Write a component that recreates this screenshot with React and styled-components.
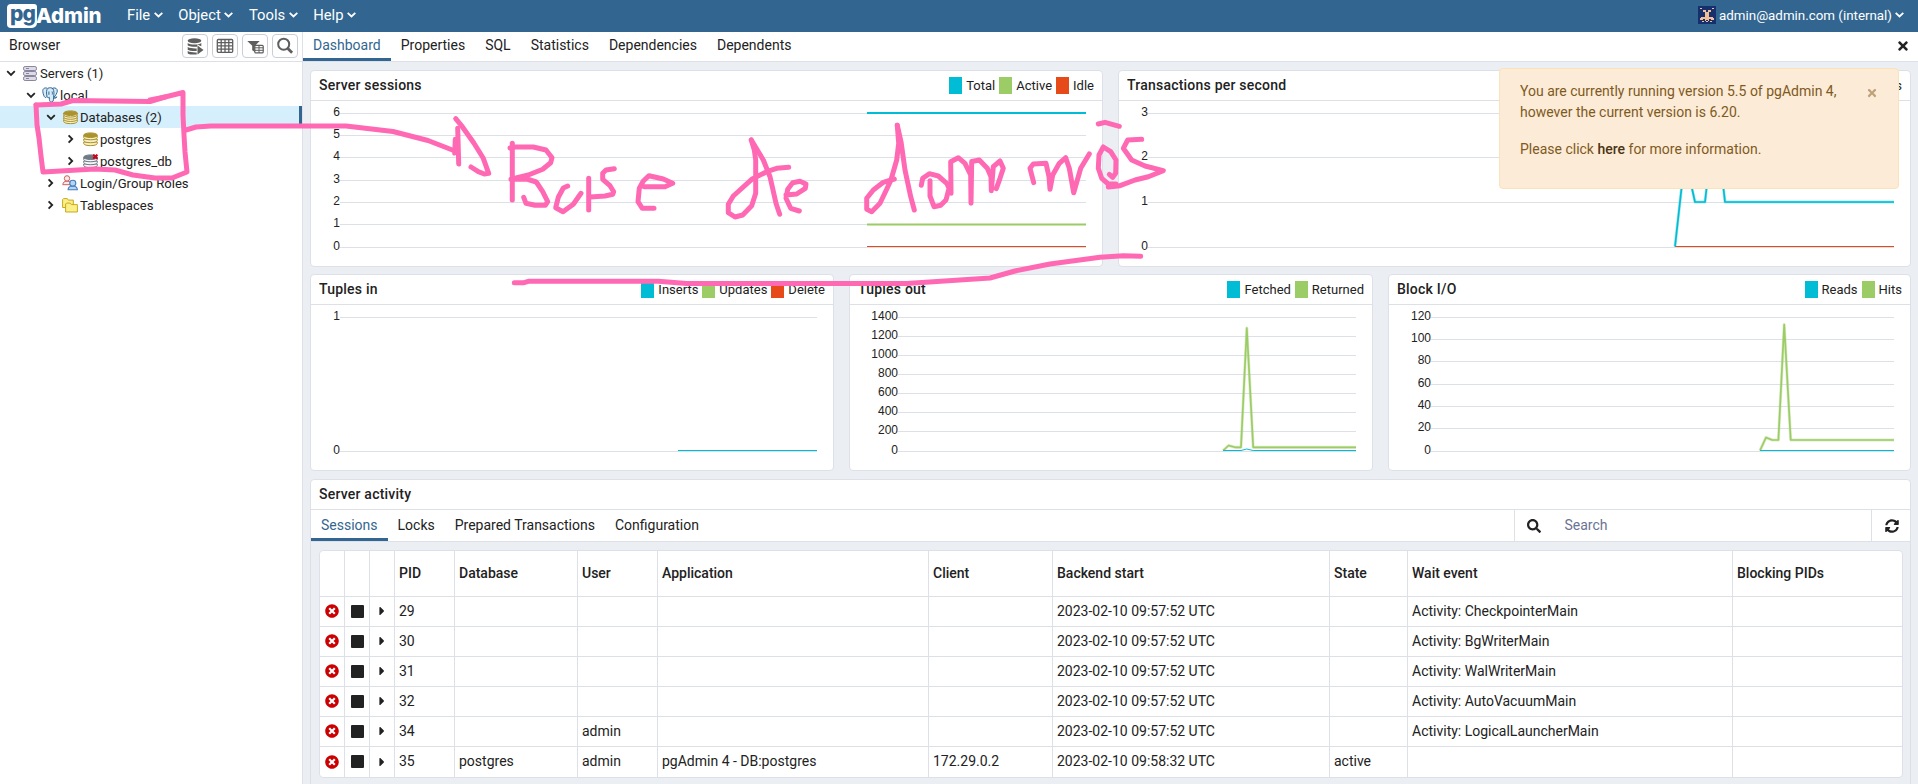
import React from "react";
import styled, { createGlobalStyle } from "styled-components";
import { FaSearch, FaSyncAlt, FaTimesCircle, FaCaretRight, FaTimes } from "react-icons/fa";

const c = {
  primary: "#326690",
  border: "#dde0e6",
  bg: "#ebeef3",
  text: "#222222",
  cyan: "#00bcd4",
  green: "#9ccc65",
  red: "#e64a19",
  ink: "#ff69b4",
};

const GlobalStyle = createGlobalStyle`
  *, *::before, *::after { box-sizing: border-box; }
  body {
    margin: 0;
    overflow: hidden;
    font: 14px/21px Roboto, "Liberation Sans", sans-serif;
    color: ${c.text};
    background: #fff;
  }
`;

const Page = styled.div`
  position: relative;
  display: flex;
  flex-direction: column;
  width: 1918px;
  height: 784px;
  overflow: hidden;
`;

/* ---------- top bar ---------- */
const TopBar = styled.header`
  display: flex;
  align-items: center;
  flex: 0 0 32px;
  padding: 0 14px 2px 7px;
  background: ${c.primary};
  color: #fff;
`;
const Logo = styled.div`
  display: flex;
  align-items: center;
  width: 96px;
  height: 25px;
  margin: 1px 24px 0 0;
  font: 800 20.5px/24px Inter, sans-serif;
  letter-spacing: -0.1px;
`;
const LogoBadge = styled.span`
  flex: none;
  width: 30px;
  height: 24px;
  padding-left: 3px;
  border-radius: 4px 3px 5px 4px;
  background: #fff;
  color: ${c.primary};
  font-size: 21px;
  line-height: 19px;
  letter-spacing: -1px;
`;
const LogoName = styled.span`
  margin-left: -1px;
  line-height: 22px;
`;
const MenuItem = styled.div`
  display: flex;
  align-items: center;
  gap: 3.5px;
  margin-right: 15.6px;
  font-size: 14.8px;
`;
const UserMenu = styled.div`
  display: flex;
  align-items: center;
  margin-left: auto;
  font-size: 13.35px;
  gap: 3px;
`;

/* ---------- body ---------- */
const Body = styled.div`
  display: flex;
  flex: 1;
  min-height: 0;
`;
const Sidebar = styled.aside`
  flex: 0 0 303px;
  border-right: 1px solid ${c.border};
`;
const SidebarHead = styled.div`
  display: flex;
  align-items: center;
  gap: 4px;
  height: 30px;
  padding: 0 4px 2px 9px;
  border-bottom: 1px solid ${c.border};
`;
const SidebarTitle = styled.span`
  flex: 1;
`;
const ToolButton = styled.button`
  display: flex;
  align-items: center;
  justify-content: center;
  width: 26px;
  height: 24px;
  margin-top: 1px;
  padding: 0;
  border: 1px solid #c9cfd6;
  border-radius: 4px;
  background: #fff;
`;
const TreeRow = styled.div`
  display: flex;
  align-items: center;
  height: 22px;
  padding-left: ${(p) => 6 + p.$level * 20}px;
  font-size: 13.1px;
  background: ${(p) => (p.$active ? "#d6effc" : "transparent")};
  border-right: ${(p) => (p.$active ? `3px solid ${c.primary}` : "none")};
  svg { flex: none; }
`;
const TreeIcon = styled.span`
  display: flex;
  justify-content: center;
  width: 18px;
  margin: 0 1px 0 5px;
`;

const Main = styled.main`
  display: flex;
  flex: 1;
  min-width: 0;
  flex-direction: column;
  background: ${c.bg};
`;
const TabBar = styled.nav`
  display: flex;
  flex: none;
  height: ${(p) => p.$height}px;
  border-bottom: 1px solid ${c.border};
  background: #fff;
`;
const Tab = styled.div`
  padding: ${(p) => p.$top}px 10px 0;
  color: ${(p) => (p.$active ? c.primary : c.text)};
  box-shadow: ${(p) => (p.$active ? `inset 0 -3px ${c.primary}` : "none")};
`;
const TabClose = styled.div`
  display: flex;
  align-items: center;
  margin-left: auto;
  padding: 0 8px 1px 0;
`;
const Dashboard = styled.div`
  flex: 1;
  padding: 8px 7px 0;
`;
const CardRow = styled.div`
  display: grid;
  grid-template-columns: ${(p) => p.$columns};
  gap: 15px;
  margin-bottom: ${(p) => p.$after}px;
`;
const Card = styled.section`
  height: ${(p) => p.$height}px;
  overflow: hidden;
  border: 1px solid ${c.border};
  border-radius: 4px;
  background: #fff;
`;
const CardHead = styled.div`
  display: flex;
  align-items: center;
  justify-content: space-between;
  height: 30px;
  padding: 0 8px;
  border-bottom: 1px solid ${c.border};
`;
const CardTitle = styled.div`
  font-weight: 500;
  letter-spacing: 0.22px;
`;
const Legend = styled.div`
  display: flex;
  align-items: center;
  gap: 4px;
  font-size: 13px;
`;
const LegendItem = styled.span`
  display: flex;
  align-items: center;
  gap: 4px;
  &::before {
    content: "";
    width: 13px;
    height: 17px;
    background: ${(p) => p.$color};
  }
`;
const Plot = styled.svg`
  display: block;
  text {
    font: 12px "Liberation Sans", sans-serif;
    fill: ${c.text};
    text-anchor: end;
  }
`;

/* ---------- activity ---------- */
const SearchBox = styled.div`
  display: flex;
  align-items: center;
  width: 357px;
  margin-left: auto;
  padding-left: 12px;
  gap: 23.5px;
  border-left: 1px solid ${c.border};
`;
const SearchHint = styled.span`
  color: #6b7394;
`;
const Refresh = styled.div`
  display: flex;
  align-items: center;
  justify-content: center;
  width: 39px;
  padding-left: 1px;
  border-left: 1px solid ${c.border};
`;
const ActivityBody = styled.div`
  height: 300px;
  padding: 8px;
  background: ${c.bg};
`;
const Table = styled.div`
  width: 1584px;
  border: 1px solid ${c.border};
  border-radius: 4px;
  background: #fff;
  overflow: hidden;
`;
const TableRow = styled.div`
  display: grid;
  grid-template-columns: 25px 25px 25px 60px 123px 80px 271px 124px 277px 78px 325px 169px;
  height: ${(p) => (p.$head ? 46 : 30)}px;
  font-weight: ${(p) => (p.$head ? 500 : 400)};
  border-bottom: 1px solid ${c.border};
  &:last-child { border-bottom: 0; }
`;
const Cell = styled.div`
  display: flex;
  align-items: center;
  justify-content: ${(p) => (p.$center ? "center" : "flex-start")};
  padding: 0 ${(p) => (p.$center ? 0 : 4)}px 1px;
  border-right: 1px solid ${c.border};
  &:last-child { border-right: 0; }
`;
const StopSquare = styled.span`
  width: 13px;
  height: 13px;
  margin-left: 1px;
  border-radius: 1px;
  background: ${c.text};
`;

/* ---------- overlays ---------- */
const Notice = styled.div`
  position: absolute;
  top: 68px;
  left: 1499px;
  display: flex;
  justify-content: space-between;
  width: 400px;
  height: 121px;
  padding: 12px 20px 0 20px;
  border: 1px solid #fbe2bb;
  border-radius: 4px;
  background: #fcebd7;
  color: #7e5a22;
`;
const NoticeText = styled.p`
  width: 325px;
  margin: 0 0 16px;
`;
const NoticeLink = styled.b`
  font-weight: 500;
  color: #4b3414;
`;
const NoticeClose = styled.span`
  padding-top: 3px;
  color: #bfa27a;
`;
const Annotation = styled.svg`
  position: absolute;
  inset: 0;
  pointer-events: none;
`;

/* ---------- icons ---------- */
const Chevron = ({ right }) => (
  <svg width="10" height="10" viewBox="0 0 10 10" fill="none" stroke={c.text} strokeWidth="1.8">
    {right ? <path d="M2.6 1.4 6.2 5 2.6 8.6" /> : <path d="M1.2 3.2 5 6.9 8.8 3.2" />}
  </svg>
);
const MenuChevron = () => (
  <svg width="9" height="8" viewBox="0 0 9 8" fill="none" stroke="#fff" strokeWidth="1.8">
    <path d="M.7 1.8 4.5 5.4 8.3 1.8" />
  </svg>
);
const ServersIcon = () => (
  <svg width="14" height="15" viewBox="0 0 14 15" fill="#dcdbe6" stroke="#8986a0" strokeWidth="1">
    {[0.5, 5.5, 10.5].map((y) => (
      <g key={y}>
        <rect x=".5" y={y} width="13" height="4" rx="1.6" />
        <path d={`M3 ${y + 2}h3`} />
      </g>
    ))}
  </svg>
);
const ElephantIcon = () => (
  <svg width="16" height="16" viewBox="0 0 16 16" fill="#d5e9f7" stroke="#336791" strokeWidth="1" strokeLinejoin="round">
    <path d="M5.2 1.2C2.4.3.5 1.8.8 4.5c.3 2.5 1.3 5.5 2.4 6 .8.3 1.3-.5 1.9-1.2" />
    <path d="M10.5 1.2c2.9-.9 5 .5 4.8 2.9-.2 2-1.8 4.700-3.200 6 .9.4 2 .3 2.800-.2-.7 1.200-2 1.600-3.200 1.200" />
    <path d="M5 9.5C4.3 6.5 4.2 2.6 5.8 1.3 7.5.4 10 .5 11 1.9c1.2 1.9 1 5 .7 7.1-.3 2.5.2 5.3-1.7 6.1-2 .5-2.5-1-2.6-2.8l-.1-2C6.3 11 5.4 10.8 5 9.5Z" />
    <path d="M6.9 4.5v3.300M10 4.5c.6 1 .5 2 .2 3" />
  </svg>
);
const DbIcon = ({ dark = "#ab922d", light = "#f7efc4", layers = 3, off }) => (
  <svg width="15" height="15" viewBox="0 0 15 15">
    <g fill={light} stroke={dark} strokeWidth="1">
      {Array.from({ length: layers }, (_, i) => {
        const y = 12.2 - i * (8.8 / layers);
        return <path key={i} d={`M.7 ${y - 2.2}v1.4C.7 ${y + 2.2} 14.3 ${y + 2.2} 14.3 ${y - 0.8}v-1.4Z`} />;
      })}
      <ellipse cx="7.5" cy="3.2" rx="6.8" ry="2.3" fill={dark} />
    </g>
    {off && <path d="M10.2.6 14.4 4.8M14.4.6 10.2 4.8" stroke="#d0021b" strokeWidth="2" />}
  </svg>
);
const Person = ({ fill, stroke }) => (
  <g fill={fill} stroke={stroke} strokeWidth="1" strokeLinejoin="round">
    <path d="M.6 9.5c.2-2.5 1.7-3.3 3.3-3.5h1.7c1.6.2 3.1 1 3.3 3.5Z" />
    <circle cx="4.8" cy="3.2" r="2.7" />
  </g>
);
const RolesIcon = () => (
  <svg width="17" height="16" viewBox="0 0 17 16">
    <g transform="translate(.2 .2)"><Person fill="#fbe9e7" stroke="#cc5f5f" /></g>
    <g transform="translate(5.4 4.8) scale(1.12 1.05)"><Person fill="#b5d5f3" stroke="#4a7ebb" /></g>
  </svg>
);
const FoldersIcon = () => (
  <svg width="16" height="15" viewBox="0 0 16 15" fill="#faf089" stroke="#c9a91c" strokeWidth="1" strokeLinejoin="round">
    <path d="M.6 9.5V1.5L1.5.6h3.8l1 1.5h5v7.4Z" />
    <path d="M3.6 14V6l.9-.9h3.9l1 1.5h6V14Z" />
  </svg>
);
const QueryIcon = () => (
  <svg width="17" height="18" viewBox="0 0 17 18" fill="#5e5e5e">
    <ellipse cx="7.5" cy="3.8" rx="6.8" ry="2.5" />
    <path d="M.7 6c2.5 2 11 2 13.6 0v3.3l-4-1.8v2.3C6.5 10 2.5 9.6.7 8.5ZM.7 10c2 1.2 6 1.6 9 1.4v2.5c-3.5.3-7.5-.1-9-1.2ZM.7 14.1c2 1.2 6 1.6 9 1.4v1.9c-4 .4-9 0-9-1.5Z" />
    <path d="M10.5 8.5 16.5 13l-6 4.5Z" />
  </svg>
);
const GridIcon = () => (
  <svg width="18" height="16" viewBox="0 0 18 16" fill="none" stroke="#5e5e5e" strokeWidth="1.3">
    <rect x="1.3" y="1.5" width="15.4" height="12.8" rx="1" />
    <path d="M1.3 4.7h15.4M1.3 7.9h15.4M1.3 11.1h15.4M5.2 1.5v12.8M9 1.5v12.8M12.8 1.5v12.8" />
  </svg>
);
const FilterIcon = () => (
  <svg width="17" height="15" viewBox="0 0 17 15">
    <path fill="#5e5e5e" d="M.3 2h12.4L8 6.8v6.2L5.2 11.2V6.8Z" />
    <rect x="7.8" y="6.3" width="8.4" height="7.6" rx="1" fill="#fff" stroke="#5e5e5e" strokeWidth="1.2" />
    <path d="M8 8.8h8.4M8 11.3h8.4M12 6.5v7.4" stroke="#5e5e5e" />
  </svg>
);
const MagnifierIcon = () => (
  <svg width="18" height="18" viewBox="0 0 18 18" fill="none" stroke="#5e5e5e">
    <circle cx="7.7" cy="7.2" r="5.5" strokeWidth="2" />
    <path d="m11.8 11.5 4.3 4.3" strokeWidth="2.8" />
  </svg>
);
const Identicon = () => (
  <svg width="18" height="18" viewBox="0 0 18 18" shapeRendering="crispEdges">
    <rect width="18" height="18" fill="#16306e" />
    <path fill="#f3bd98" d="M2 2h2v1H2ZM14 2h2v1h-2ZM5 4h3v2h2V4h3v2h-2v4H7V6H5ZM3 11h4v-1h4v1h4v3h-2v-1h-2v1H7v-1H5v1H3ZM2 12h1v2H2ZM15 12h1v2h-1ZM4 15h2v1H4ZM7 14h1v1H7ZM10 14h1v1h-1ZM8 15h2v1H8ZM12 15h2v1h-2Z" />
  </svg>
);

/* ---------- chart ---------- */
const TOP = 12;
const BOTTOM = 146;

function Chart({ title, width, left, ticks, legend, children }) {
  const right = width - 18;
  return (
    <Card $height={197}>
      <CardHead>
        <CardTitle>{title}</CardTitle>
        <Legend>
          {legend.map(([name, color]) => (
            <LegendItem key={name} $color={color}>{name}</LegendItem>
          ))}
        </Legend>
      </CardHead>
      <Plot width={width - 2} height={165}>
        {ticks.map((tick, i) => {
          const y = Math.floor(TOP + ((BOTTOM - TOP) * i) / (ticks.length - 1));
          return (
            <g key={tick}>
              <rect x={left} y={y} width={right - left} height="1" fill={c.border} />
              <text x={left} y={y + 3}>{tick}</text>
            </g>
          );
        })}
        {children}
      </Plot>
    </Card>
  );
}
const Series = ({ points, color }) => (
  <g fill="none" strokeLinejoin="round">
    <polyline points={points} stroke={color} strokeOpacity=".35" strokeWidth="3" />
    <polyline points={points} stroke={color} strokeWidth="1.7" />
  </g>
);

const TREE = [
  { level: 0, label: "Servers (1)", icon: <ServersIcon />, open: true },
  { level: 1, label: "local", icon: <ElephantIcon />, open: true },
  { level: 2, label: "Databases (2)", icon: <DbIcon layers={4} />, open: true, active: true },
  { level: 3, label: "postgres", icon: <DbIcon /> },
  { level: 3, label: "postgres_db", icon: <DbIcon dark="#6f7a86" light="#f4f5f7" off /> },
  { level: 2, label: "Login/Group Roles", icon: <RolesIcon /> },
  { level: 2, label: "Tablespaces", icon: <FoldersIcon /> },
];

const HEADINGS = ["", "", "", "PID", "Database", "User", "Application", "Client", "Backend start", "State", "Wait event", "Blocking PIDs"];
const SESSIONS = [
  ["29", "", "", "", "", "2023-02-10 09:57:52 UTC", "", "Activity: CheckpointerMain", ""],
  ["30", "", "", "", "", "2023-02-10 09:57:52 UTC", "", "Activity: BgWriterMain", ""],
  ["31", "", "", "", "", "2023-02-10 09:57:52 UTC", "", "Activity: WalWriterMain", ""],
  ["32", "", "", "", "", "2023-02-10 09:57:52 UTC", "", "Activity: AutoVacuumMain", ""],
  ["34", "", "admin", "", "", "2023-02-10 09:57:52 UTC", "", "Activity: LogicalLauncherMain", ""],
  ["35", "postgres", "admin", "pgAdmin 4 - DB:postgres", "172.29.0.2", "2023-02-10 09:58:32 UTC", "active", "", ""],
];

/* Freehand marker strokes drawn over the window. */
const STROKES = [
  "36,105 61,104 73,100.5 110,101 150,101.5 165,97",
  "150,100 165,97 183,92.5 183,115 184,135 185,152 187,172 172,178 155,178 133,175 115,170 95,169 43,172 41,156 39,138 37,125 36,105",
  "186,130 196,127 211,126 346,126 393,131.5 428,140.5 455,151",
  "455.7,118.7 462.3,126.7 474,143.3 483.3,158.3 488.7,173.3 484.3,174 478.3,171.7 471,167",
  "457.7,128.3 458.7,164",
  "455.3,139.3 454.7,153",
  "512.3,143.3 512.3,200",
  "510,148 515,147 533.3,147 546,150 552,157.7 550.7,162.7 542.7,169.3 528.3,175 511,179.3 526.7,179 536.3,182 542.7,191.7 547.7,201.7 545.3,205.3 535,205.3 526,203.3 523.7,197.3",
  "567.7,186 563.3,188 558.3,197.3 555.7,207.7 563,211.7 573.3,204.3 581,193.3",
  "588.7,178.3 588.7,210",
  "614.3,168.7 606,170 602.7,173.3 602.7,179.3 610,185.7 613.7,191.7 612.7,194.3 605,196 590,197",
  "644.3,186.7 665,186.7 672.7,183.3 663.3,179 649,175.7 643.3,181 639.3,188.3 638,201.7 642.3,208.3 654,208.3",
  "751.3,140 754.3,150 755.7,160 755.7,193.3 751.7,205.7 742.7,215 735,217 728.3,212.7 728.3,204.3 733.3,196 751.7,179.3 766.7,171.7 776.7,168.3 788.7,167.3",
  "751.3,140 763.3,160 770,176.7 776,203.3 779.7,214.3",
  "786,195 796.7,194 805.3,188.3 806,184 800,181.3 792.7,182.7 787.7,189.3 786,198.3 790.7,208.3 799.3,211",
  "897.3,125.3 898.7,143.3 896.7,160 890.7,180.7 880,203.3 871.7,211.7 866.7,209.3 866.7,198.3 873.3,190 883.3,182.3 894.3,179",
  "897.3,125.3 901,141.7 905,170 910.7,196.7 914.3,210",
  "921.3,185.3 922.7,178.3 929.3,173.7 938.3,176 946.7,183.3 949,188.3 946,200 940.7,205.3 934,206.7 930,196 930,180.7",
  "951,193.3 950.7,161.7 958.3,157.7 965,163.3 970.7,175 971,203.3 971.7,161.5 979.3,160 987.3,168.3 991,176.7 991.3,190.7 993.3,166.7 1000,161 1003.3,168.3 1000,178.3 996.3,188.7",
  "1033.7,182.7 1030,168.3 1033.3,164 1046,163.3 1049,176.7 1050,189.3 1052.7,175 1059.3,163.3 1065.7,157.7 1069.3,168.3 1073.7,192.7 1080.7,168.3 1089.3,154",
  "1098.3,124 1105,122.3 1119.3,126.3",
  "1109.3,174.3 1112.7,177.3 1115.7,173.3 1116,160 1110.7,151.7 1103.3,147 1099,155 1098.3,168.3 1101.7,178.3 1108.3,184 1116,184",
  "1141.7,139.3 1127.7,140 1123.3,148.3 1131.7,160 1145,166 1163.3,170.7 1148.3,176.7 1135,180 1120,185.7 1108.3,187",
  "514.3,282.7 524,282.7 528.3,281.3 658.3,281.3 686.7,283.5 906.7,283.5 990,278 1015,271 1050,264 1100,257.3 1123.3,255.7 1140.7,256.3",
];

export default function App() {
  return (
    <Page>
      <GlobalStyle />
      <TopBar>
        <Logo>
          <LogoBadge>pg</LogoBadge>
          <LogoName>Admin</LogoName>
        </Logo>
        {["File", "Object", "Tools", "Help"].map((name) => (
          <MenuItem key={name}>{name}<MenuChevron /></MenuItem>
        ))}
        <UserMenu><Identicon />admin@admin.com (internal)<MenuChevron /></UserMenu>
      </TopBar>

      <Body>
        <Sidebar>
          <SidebarHead>
            <SidebarTitle>Browser</SidebarTitle>
            <ToolButton><QueryIcon /></ToolButton>
            <ToolButton><GridIcon /></ToolButton>
            <ToolButton><FilterIcon /></ToolButton>
            <ToolButton><MagnifierIcon /></ToolButton>
          </SidebarHead>
          {TREE.map((n) => (
            <TreeRow key={n.label} $level={n.level} $active={n.active}>
              <Chevron right={!n.open} />
              <TreeIcon>{n.icon}</TreeIcon>
              {n.label}
            </TreeRow>
          ))}
        </Sidebar>

        <Main>
          <TabBar $height={30}>
            {["Dashboard", "Properties", "SQL", "Statistics", "Dependencies", "Dependents"].map((t, i) => (
              <Tab key={t} $active={i === 0} $top={3}>{t}</Tab>
            ))}
            <TabClose><FaTimes size={14} /></TabClose>
          </TabBar>

          <Dashboard>
            <CardRow $columns="793px 793px" $after={7}>
              <Chart title="Server sessions" width={793} left={29} ticks={[6, 5, 4, 3, 2, 1, 0]}
                legend={[["Total", c.cyan], ["Active", c.green], ["Idle", c.red]]}>
                <rect x="556" y="11" width="219" height="2" fill={c.cyan} />
                <rect x="556" y="122" width="219" height="3" fill={c.green} opacity=".5" />
                <rect x="556" y="123" width="219" height="1" fill={c.green} />
                <rect x="556" y="145" width="219" height="1" fill={c.red} />
              </Chart>
              <Chart title="Transactions per second" width={793} left={29} ticks={[3, 2, 1, 0]}
                legend={[["Rollbacks", c.red]]}>
                <rect x="556" y="145" width="219" height="1" fill={c.red} />
                <Series color={c.cyan} points="556,145.5 566,56 576,101 586,101 596,12 606,101 775,101" />
              </Chart>
            </CardRow>

            <CardRow $columns="524px 524px 523px" $after={8}>
              <Chart title="Tuples in" width={524} left={29} ticks={[1, 0]}
                legend={[["Inserts", c.cyan], ["Updates", c.green], ["Delete", c.red]]}>
                <rect x="367" y="145" width="139" height="1" fill={c.cyan} />
              </Chart>
              <Chart title="Tuples out" width={524} left={48} ticks={[1400, 1200, 1000, 800, 600, 400, 200, 0]}
                legend={[["Fetched", c.cyan], ["Returned", c.green]]}>
                <Series color={c.green} points="373.2,145.5 378.6,140.5 385,142.3 391,142.3 396.8,23 403.2,142.3 506,142.3" />
                <path d="M373 145.5h18l5.8-1.5 6.4 1.5H506" fill="none" stroke={c.cyan} />
              </Chart>
              <Chart title="Block I/O" width={523} left={42} ticks={[120, 100, 80, 60, 40, 20, 0]}
                legend={[["Reads", c.cyan], ["Hits", c.green]]}>
                <Series color={c.green} points="371,145.5 377,132.5 383.2,135 389.4,135 395.2,19.5 401.7,135 505,135" />
                <rect x="371" y="145" width="134" height="1" fill={c.cyan} />
              </Chart>
            </CardRow>

            <Card $height={330}>
              <CardHead><CardTitle>Server activity</CardTitle></CardHead>
              <TabBar $height={32}>
                {["Sessions", "Locks", "Prepared Transactions", "Configuration"].map((t, i) => (
                  <Tab key={t} $active={i === 0} $top={5}>{t}</Tab>
                ))}
                <SearchBox>
                  <FaSearch size={14} />
                  <SearchHint>Search</SearchHint>
                </SearchBox>
                <Refresh><FaSyncAlt size={14} /></Refresh>
              </TabBar>
              <ActivityBody>
                <Table>
                  <TableRow $head>
                    {HEADINGS.map((h, i) => <Cell key={i}>{h}</Cell>)}
                  </TableRow>
                  {SESSIONS.map((row) => (
                    <TableRow key={row[0]}>
                      <Cell $center><FaTimesCircle size={14} color="#cc0000" /></Cell>
                      <Cell $center><StopSquare /></Cell>
                      <Cell $center><FaCaretRight size={14} /></Cell>
                      {row.map((value, i) => <Cell key={i}>{value}</Cell>)}
                    </TableRow>
                  ))}
                </Table>
              </ActivityBody>
            </Card>
          </Dashboard>
        </Main>
      </Body>

      <Notice>
        <div>
          <NoticeText>You are currently running version 5.5 of pgAdmin 4, however the current version is 6.20.</NoticeText>
          <NoticeText>Please click <NoticeLink>here</NoticeLink> for more information.</NoticeText>
        </div>
        <NoticeClose><FaTimes size={12} /></NoticeClose>
      </Notice>

      <Annotation width="1918" height="784" fill="none" stroke={c.ink} strokeWidth="5" strokeLinecap="round" strokeLinejoin="round">
        {STROKES.map((points, i) => <polyline key={i} points={points} />)}
      </Annotation>
    </Page>
  );
}
